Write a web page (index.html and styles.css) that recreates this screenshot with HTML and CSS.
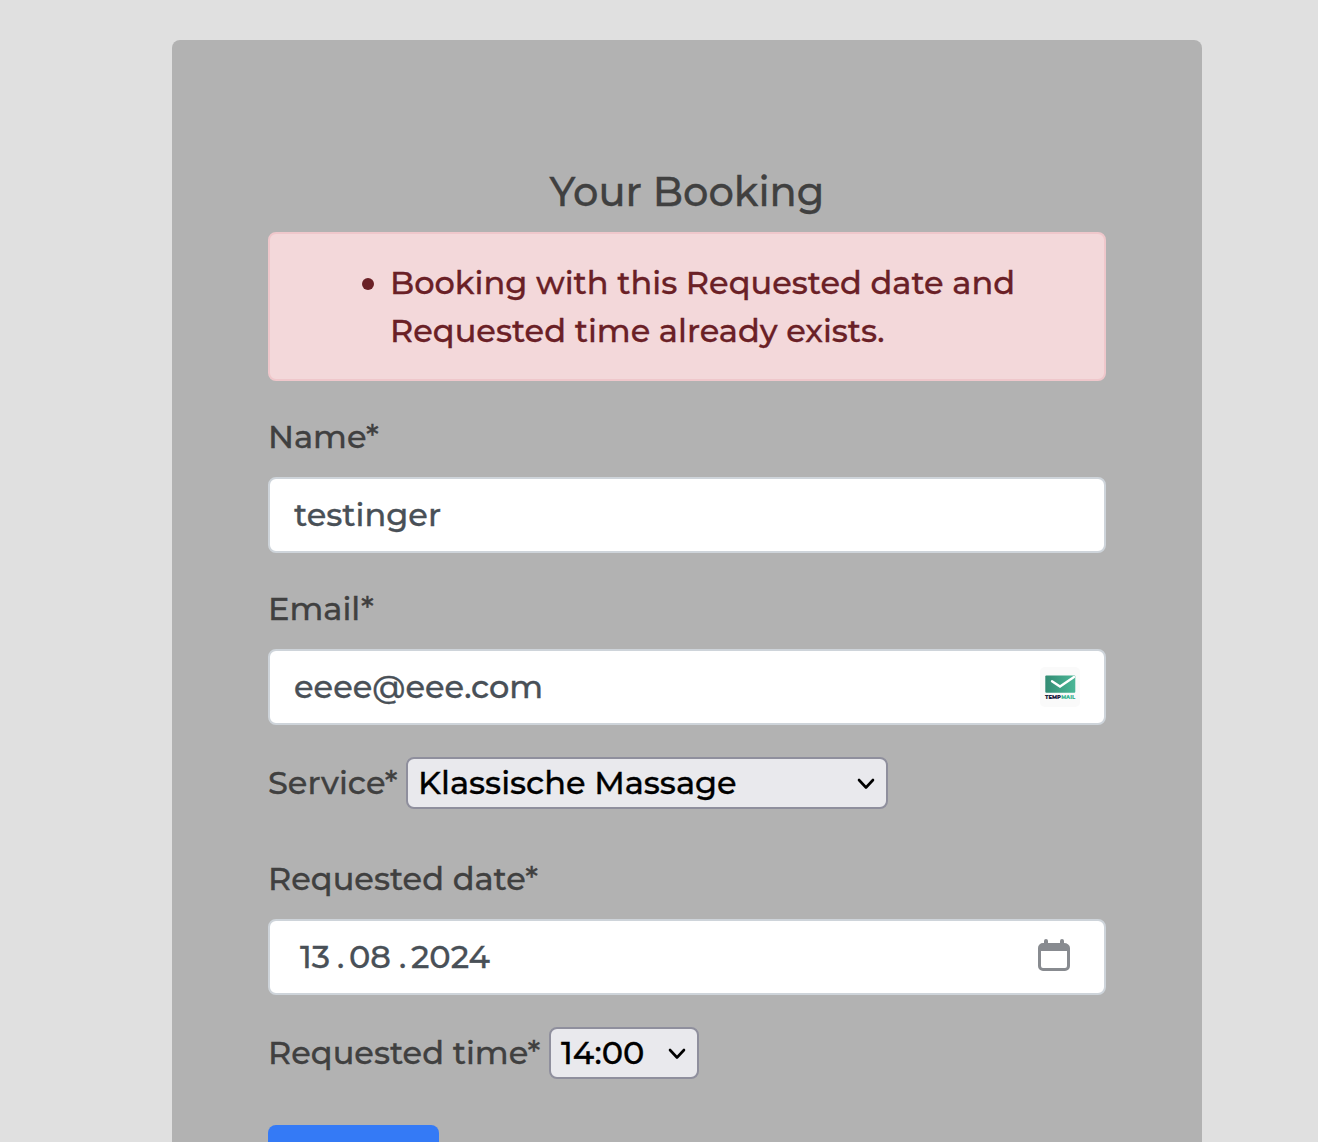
FILE: index.html
```html
<!DOCTYPE html>
<html lang="en">
<head>
<meta charset="utf-8">
<title>Your Booking</title>
<link rel="stylesheet" href="styles.css">
</head>
<body>
<main class="card">
  <h1 class="title">Your Booking</h1>
  <div class="alert">
    <ul class="errors"><li>Booking with this Requested date and<br>Requested time already exists.</li></ul>
  </div>
  <div class="group">
    <div class="label">Name*</div>
    <div class="control">testinger</div>
  </div>
  <div class="group">
    <div class="label">Email*</div>
    <div class="control">
      <span>eeee@eee.com</span>
      <svg class="tempmail" width="40" height="40" viewBox="0 0 40 40">
        <defs><linearGradient id="mail" x1="0" x2="1"><stop offset="0" stop-color="#328b73"/><stop offset="1" stop-color="#4bb797"/></linearGradient></defs>
        <rect width="40" height="40" rx="5" fill="#fafafa"/>
        <rect x="5.3" y="8.5" width="30" height="17.3" rx="1" fill="url(#mail)"/>
        <path d="M12 14.200l8 5.300 14-9.500" fill="none" stroke="#fff" stroke-width="2.300" stroke-linecap="round"/>
        <text x="5" y="32" class="logo" textLength="16" lengthAdjust="spacingAndGlyphs" fill="#1d2340">TEMP</text>
        <text x="21.200" y="32" class="logo" textLength="14" lengthAdjust="spacingAndGlyphs" fill="#45b896">MAIL</text>
      </svg>
    </div>
  </div>
  <div class="row">
    <span class="row-label service-label">Service*</span>
    <div class="select service"><span>Klassische Massage</span>
      <svg class="chevron" width="18" height="12" viewBox="0 0 18 12"><path d="M2 2l7 7.500 7-7.500"/></svg>
    </div>
  </div>
  <div class="group">
    <div class="label">Requested date*</div>
    <div class="control date">
      <span class="day">13</span><span class="dot">.</span><span class="month">08</span><span class="dot">.</span><span class="year">2024</span>
      <svg class="calendar" width="32" height="32" viewBox="0 0 32 32">
        <path d="M6 4V2a2 2 0 0 1 4 0v2h12V2a2 2 0 0 1 4 0v2a6 5 0 0 1 6 5v18a5 5 0 0 1-5 5H5a5 5 0 0 1-5-5V9a5 5 0 0 1 5-5zM3 12v15a2 2 0 0 0 2 2h22a2 2 0 0 0 2-2V12z" fill="#888b90" fill-rule="evenodd"/>
      </svg>
    </div>
  </div>
  <div class="row">
    <span class="row-label time-label">Requested time*</span>
    <div class="select time"><span>14:00</span>
      <svg class="chevron" width="18" height="12" viewBox="0 0 18 12"><path d="M2 2l7 7.500 7-7.500"/></svg>
    </div>
  </div>
  <div class="submit"></div>
</main>
</body>
</html>
```

FILE: styles.css
```css
* { box-sizing: border-box; }
body {
  margin: 0;
  height: 1142px;
  padding: 40px 116px 0 172px;
  background: #e0e0e0;
  color: #404040;
  font: 500 32px/48px Montserrat, Inter, sans-serif;
  -webkit-text-stroke: 0.3px;
  white-space: nowrap;
}
.card {
  height: 1102px;
  padding: 128px 96px 0;
  border-radius: 8px 8px 0 0;
  background: #b2b2b2;
}
.title {
  margin: 0 0 16px;
  font-size: 40px;
  font-weight: 500;
  line-height: 48px;
  text-align: center;
}
.alert {
  height: 149px;
  padding: 25px 40px 23px;
  border: 2px solid #efc7cb;
  border-radius: 8px;
  background: #f3d8da;
  color: #6a2026;
}
.errors { margin: 0; padding: 0 0 0 80px; list-style: none; }
.errors li::before {
  content: "";
  float: left;
  width: 12px;
  height: 12px;
  margin: 19px 0 0 -28px;
  border-radius: 50%;
  background: #6a2026;
}
.group { padding-top: 32px; }
.label { height: 48px; margin-bottom: 16px; }
.control {
  display: flex;
  align-items: center;
  height: 76px;
  padding: 0 24px;
  border: 2px solid #ced4da;
  border-radius: 8px;
  background: #fff;
  color: #495057;
}
.tempmail { margin-left: auto; }
.logo { font: 900 5.6px Montserrat, sans-serif; -webkit-text-stroke: 0; }
.row {
  display: flex;
  align-items: center;
  height: 52px;
  margin-top: 32px;
}
.select {
  display: flex;
  align-items: center;
  justify-content: space-between;
  height: 52px;
  padding: 0 11px 0 10px;
  border: 2px solid #8f8f9d;
  border-radius: 8px;
  background: #e9e9ed;
  color: #000;
}
.row-label { flex: none; }
.service-label { width: 138px; }
.time-label { width: 281px; }
.service { width: 482px; }
.time { width: 150px; }
.chevron {
  margin-top: 2px;
  fill: none;
  stroke: #000;
  stroke-width: 2.6;
  stroke-linecap: round;
  stroke-linejoin: round;
}
.row + .group { padding-top: 46px; }
.date { padding-left: 30px; padding-right: 34px; }
.day { width: 37px; }
.dot { width: 12px; }
.month { width: 50px; }
.calendar { margin: 0 0 4px auto; }
.submit {
  width: 171px;
  height: 17px;
  margin-top: 46px;
  border-radius: 8px 8px 0 0;
  background: #347af6;
}
```
